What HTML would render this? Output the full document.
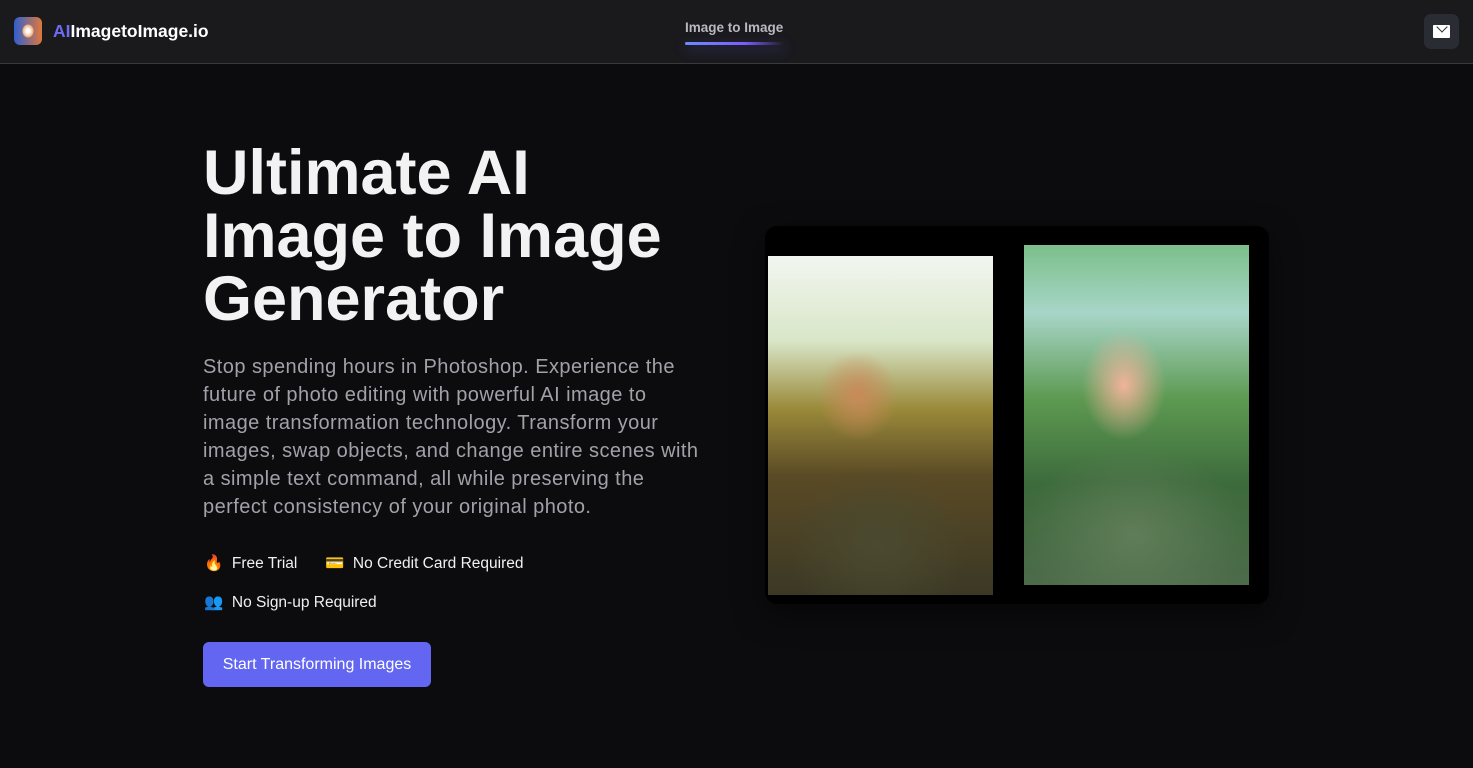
<!DOCTYPE html>
<html><head><meta charset="utf-8"><style>
*{margin:0;padding:0;box-sizing:border-box}
body{width:1473px;height:768px;background:#0c0c0e;font-family:"Liberation Sans",sans-serif;color:#fff;overflow:hidden;position:relative}
.nav{position:absolute;left:0;top:0;width:1473px;height:64px;background:#1a1a1d;border-bottom:1px solid #3a3a3e}
.logo{position:absolute;left:14px;top:17px;width:28px;height:28px;border-radius:6px;background:linear-gradient(90deg,#2f5fd0,#e0783a);}
.logo:after{content:"";position:absolute;left:8px;top:7px;width:12px;height:14px;border-radius:50%;background:radial-gradient(#fff 20%,#f4b080 60%,transparent 70%)}
.brand{position:absolute;left:53px;top:21px;font-size:17.5px;font-weight:bold}
.brand span{color:#6b6cf5}
.tab{position:absolute;left:685px;top:20px;font-size:13.5px;font-weight:bold;color:#b8b8c0}
.bar{position:absolute;left:685px;top:42px;width:100px;height:3px;border-radius:2px;background:linear-gradient(90deg,#6b8cff,#7c5cff 60%,transparent);box-shadow:0 4px 12px rgba(110,100,255,.4)}
.mail{position:absolute;left:1424px;top:14px;width:35px;height:35px;border-radius:7px;background:#2a2c33}
.mail i{position:absolute;left:9px;top:11px;width:17px;height:13px;background:#fff;border-radius:1px}
.mail i:after{content:"";position:absolute;width:7px;height:7px;border-right:1.5px solid #2a2c33;border-bottom:1.5px solid #2a2c33;transform:rotate(45deg);top:-2px;left:5px}
h1{position:absolute;left:203px;top:142px;font-size:63px;line-height:63px;font-weight:bold;color:#f2f2f2}
p.d{position:absolute;left:203px;top:353px;width:502px;font-size:20px;line-height:28px;color:#a1a1aa;letter-spacing:0.45px}
.f{position:absolute;font-size:15.5px;color:#f0f0f0}
.btn{position:absolute;left:203px;top:642px;width:228px;height:45px;border-radius:6px;background:#6366f1;font-size:16px;line-height:45px;text-align:center;color:#fff}
.card{position:absolute;left:765px;top:226px;width:504px;height:378px;background:#000;border-radius:12px;box-shadow:0 10px 30px rgba(0,0,0,.5)}
.im1{position:absolute;left:768px;top:256px;width:225px;height:339px;background:
radial-gradient(ellipse 40px 45px at 90px 140px,#c98a5a,transparent),
radial-gradient(ellipse 90px 80px at 110px 290px,#4a4a30,transparent),
linear-gradient(180deg,#f2f6f0 0%,#d9e6c8 25%,#9a8a3a 45%,#5a4a25 65%,#3b3825 100%)}
.im2{position:absolute;left:1024px;top:245px;width:225px;height:340px;background:
radial-gradient(ellipse 42px 55px at 100px 140px,#f0b39a,transparent),
radial-gradient(ellipse 110px 90px at 110px 290px,#5f7d58,transparent),
linear-gradient(180deg,#7bbf8a 0%,#a7d6c8 20%,#5e9a52 45%,#3d6b3c 70%,#4d6b4a 100%)}
</style></head><body>
<div class="nav"><div class="logo"></div><div class="brand"><span>AI</span>ImagetoImage.io</div>
<div class="tab">Image to Image</div><div class="bar"></div>
<div class="mail"><i></i></div></div>
<h1>Ultimate AI<br>Image to Image<br>Generator</h1>
<p class="d">Stop spending hours in Photoshop. Experience the<br>future of photo editing with powerful AI image to<br>image transformation technology. Transform your<br>images, swap objects, and change entire scenes with<br>a simple text command, all while preserving the<br>perfect consistency of your original photo.</p>
<div class="f" style="left:204px;top:554px">🔥&nbsp; Free Trial</div>
<div class="f" style="left:325px;top:554px">💳&nbsp; No Credit Card Required</div>
<div class="f" style="left:204px;top:593px">👥&nbsp; No Sign-up Required</div>
<div class="btn">Start Transforming Images</div>
<div class="card"></div><div class="im1"></div><div class="im2"></div>
</body></html>
